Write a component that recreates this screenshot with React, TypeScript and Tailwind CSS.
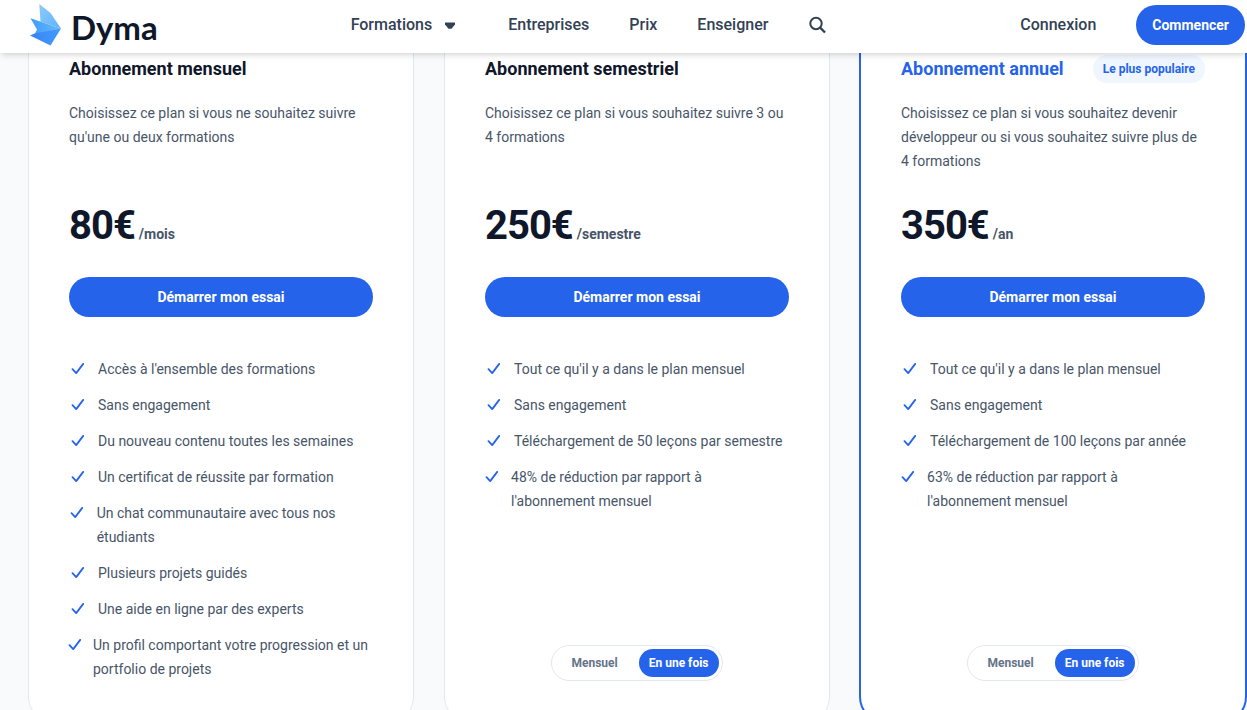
import React from 'react';
import clsx from 'clsx';

interface Plan {
    id: string;
    title: string;
    description: string;
    price: string;
    period: string;
    features: string[];
    popular?: boolean;
    installments?: boolean;
}

const plans: Plan[] = [
    {
        id: 'mensuel',
        title: 'Abonnement mensuel',
        description: "Choisissez ce plan si vous ne souhaitez suivre qu'une ou deux formations",
        price: '80€',
        period: '/mois',
        features: [
            "Accès à l'ensemble des formations",
            'Sans engagement',
            'Du nouveau contenu toutes les semaines',
            'Un certificat de réussite par formation',
            'Un chat communautaire avec tous nos étudiants',
            'Plusieurs projets guidés',
            'Une aide en ligne par des experts',
            'Un profil comportant votre progression et un portfolio de projets',
        ],
    },
    {
        id: 'semestriel',
        title: 'Abonnement semestriel',
        description: 'Choisissez ce plan si vous souhaitez suivre 3 ou 4 formations',
        price: '250€',
        period: '/semestre',
        installments: true,
        features: [
            "Tout ce qu'il y a dans le plan mensuel",
            'Sans engagement',
            'Téléchargement de 50 leçons par semestre',
            "48% de réduction par rapport à l'abonnement mensuel",
        ],
    },
    {
        id: 'annuel',
        title: 'Abonnement annuel',
        description: 'Choisissez ce plan si vous souhaitez devenir développeur ou si vous souhaitez suivre plus de 4 formations',
        price: '350€',
        period: '/an',
        popular: true,
        installments: true,
        features: [
            "Tout ce qu'il y a dans le plan mensuel",
            'Sans engagement',
            'Téléchargement de 100 leçons par année',
            "63% de réduction par rapport à l'abonnement mensuel",
        ],
    },
];

const Logo: React.FC = () => (
    <a href="#" className="flex items-center gap-2.5">
        <svg className="h-10 w-8 overflow-visible" viewBox="0 0 32 40" aria-hidden="true">
            <defs>
                <linearGradient id="wing-top" x1="0" y1="0" x2="1" y2="1">
                    <stop offset="0" stopColor="#8ccbfd" />
                    <stop offset="1" stopColor="#62b2fa" />
                </linearGradient>
                <linearGradient id="wing-middle" x1="0" y1="0" x2="1" y2="0">
                    <stop offset="0" stopColor="#3d9cfb" />
                    <stop offset="1" stopColor="#6bb9fb" />
                </linearGradient>
                <linearGradient id="wing-bottom" x1="0" y1="0" x2="1" y2="0">
                    <stop offset="0" stopColor="#3b82f6" />
                    <stop offset="1" stopColor="#409cff" />
                </linearGradient>
            </defs>
            <path d="M1.500 13.300 32 23.500 5.500 29.500 8 24.500Z" fill="url(#wing-middle)" />
            <path d="M10.300-1 21.500 8 32 23.500 11.500 16.800Z" fill="url(#wing-top)" />
            <path d="M1 30.500 5.500 28.500 32 23.500 21.500 40.600Z" fill="url(#wing-bottom)" />
        </svg>
        <span className="pt-1 font-['Lato',sans-serif] text-[33px] leading-9 font-bold text-[#0f172a]">Dyma</span>
    </a>
);

const Header: React.FC = () => (
    <header className="sticky top-0 z-10 flex items-center justify-between bg-white pt-[5px] pr-0.5 pb-2 pl-[29px] text-base font-medium text-[#334155] shadow-md">
        <Logo />
        <nav className="flex items-center gap-10">
            <button className="flex items-center gap-3 pr-3">
                Formations
                <svg width="12" height="10" viewBox="0 0 12 10" fill="currentColor" aria-hidden="true">
                    <path d="M1 2.500h10v2L7.500 8.800h-3L1 4.500Z" />
                </svg>
            </button>
            <a href="#">Entreprises</a>
            <a href="#">Prix</a>
            <a href="#">Enseigner</a>
            <button aria-label="Rechercher">
                <svg width="19" height="18" viewBox="0 0 19 18" fill="none" stroke="currentColor" strokeWidth="2" aria-hidden="true">
                    <circle cx="8" cy="7.500" r="5.700" />
                    <path d="m12 11.500 5 5" strokeWidth="2.400" />
                </svg>
            </button>
        </nav>
        <div className="flex items-center gap-10">
            <a href="#">Connexion</a>
            <button className="h-10 rounded-full bg-[#2563eb] px-4 text-sm font-bold text-white">Commencer</button>
        </div>
    </header>
);

const Feature: React.FC<{ label: string }> = ({ label }) => (
    <li className="flex gap-3">
        <span className="flex h-6 w-[17px] min-w-0 items-center justify-center">
            <svg className="shrink-0 text-[#2563eb]" width="14" height="12" viewBox="0 0 14 12" fill="none" stroke="currentColor" strokeWidth="1.800" strokeLinecap="round" strokeLinejoin="round" aria-hidden="true">
                <path d="m1.500 6.200 3.700 3.900L12.200 0.900" />
            </svg>
        </span>
        <span>{label}</span>
    </li>
);

const PaymentToggle: React.FC = () => {
    const [once, setOnce] = React.useState(true);
    const active = 'bg-[#2563eb] text-white';

    return (
        <div className="mx-auto flex gap-[5px] rounded-full border border-[#e2e8f0] p-[3px] text-xs font-bold text-[#64748b]">
            <button className={clsx('h-7 rounded-full px-4', !once && active)} aria-pressed={!once} onClick={() => setOnce(false)}>
                Mensuel
            </button>
            <button className={clsx('h-7 rounded-full px-2.5', once && active)} aria-pressed={once} onClick={() => setOnce(true)}>
                En une fois
            </button>
        </div>
    );
};

const PlanCard: React.FC<{ plan: Plan }> = ({ plan }) => (
    <section className={clsx('flex flex-col rounded-b-3xl bg-white px-10 pb-10', plan.popular ? 'ring-2 ring-[#2563eb]' : 'ring-1 ring-[#e2e8f0]')}>
        <div className="flex items-center justify-between">
            <h2 className={clsx('text-lg leading-8 font-bold', plan.popular ? 'text-[#2563eb]' : 'text-[#0f172a]')}>{plan.title}</h2>
            {plan.popular && (
                <span className="rounded-full bg-[#eff6ff] px-2.5 py-1 text-xs leading-5 font-bold text-[#2563eb]">Le plus populaire</span>
            )}
        </div>
        <p className="mt-4 min-h-18">{plan.description}</p>
        <p className="mt-8 flex items-baseline gap-x-1">
            <span className="text-[40px] leading-[42px] font-bold tracking-tight text-[#0f172a]">{plan.price}</span>
            <span className="font-bold">{plan.period}</span>
        </p>
        <button className="mt-[30px] rounded-full bg-[#2563eb] py-2 font-bold text-white">Démarrer mon essai</button>
        <ul className="mt-10 space-y-3">
            {plan.features.map(feature => (
                <Feature key={feature} label={feature} />
            ))}
        </ul>
        {plan.installments && (
            <div className="mt-auto flex pt-10">
                <PaymentToggle />
            </div>
        )}
    </section>
);

export default function App() {
    return (
        <div className="min-h-screen bg-[#f8fafc] font-['Roboto',sans-serif]">
            <Header />
            <main className="grid grid-cols-3 gap-8 pr-0.5 pb-8 pl-[29px] text-sm leading-6 text-[#475569]">
                {plans.map(plan => (
                    <PlanCard key={plan.id} plan={plan} />
                ))}
            </main>
        </div>
    );
}
